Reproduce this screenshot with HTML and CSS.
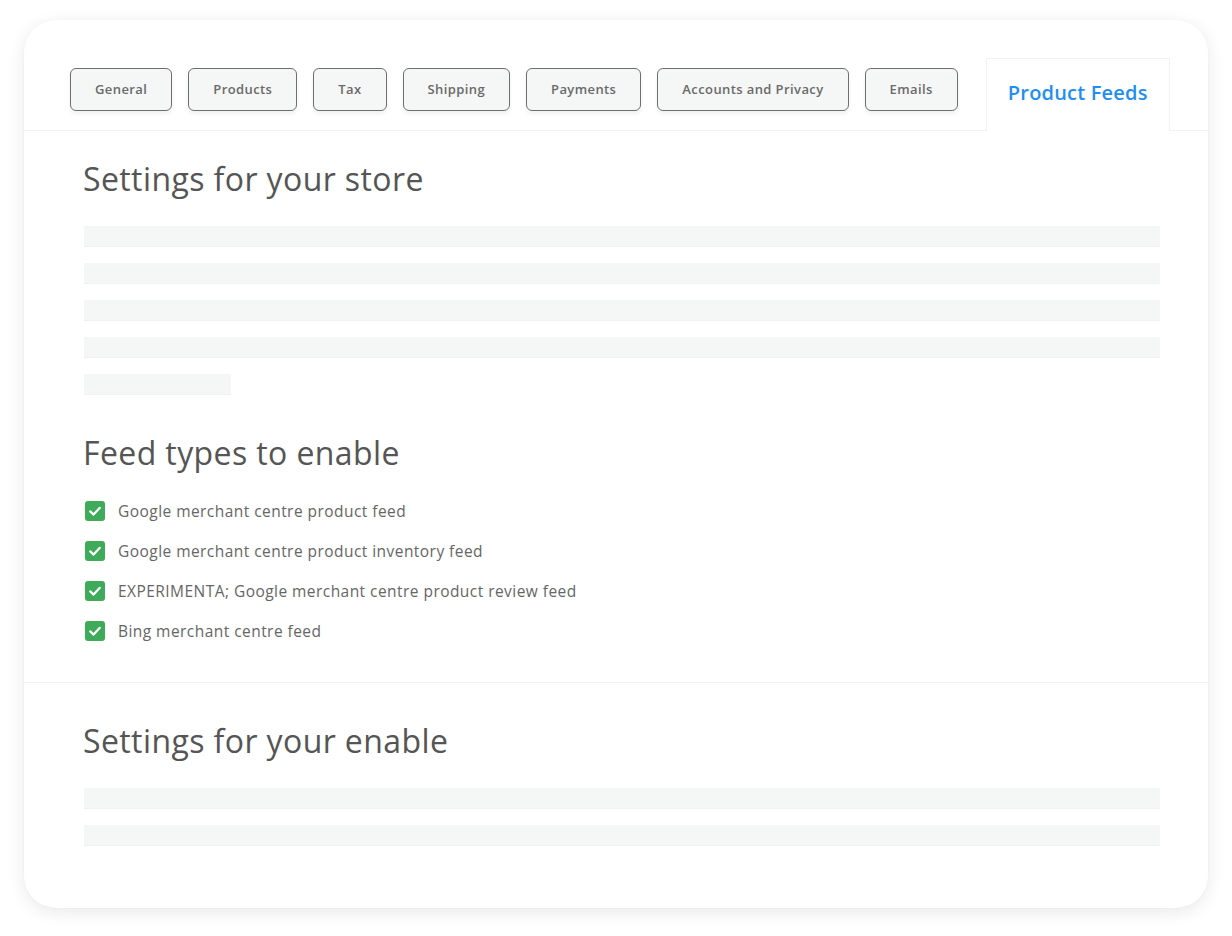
FILE: index.html
```html
<!DOCTYPE html>
<html>
<head>
<meta charset="utf-8">
<link rel="stylesheet" href="styles.css">
</head>
<body>
<div class="card">
  <div class="tabbar">
    <div class="tab">General</div>
    <div class="tab">Products</div>
    <div class="tab">Tax</div>
    <div class="tab">Shipping</div>
    <div class="tab">Payments</div>
    <div class="tab">Accounts and Privacy</div>
    <div class="tab">Emails</div>
    <div class="tab-active">Product Feeds</div>
  </div>
  <div class="section">
    <h2 class="heading">Settings for your store</h2>
    <div class="bars">
      <div class="bar"></div>
      <div class="bar"></div>
      <div class="bar"></div>
      <div class="bar"></div>
      <div class="bar short"></div>
    </div>
    <h2 class="heading heading-feed">Feed types to enable</h2>
    <ul class="checks">
      <li class="check"><span class="box"><svg viewBox="0 0 20 20" width="20" height="20"><path d="M5.2 10.4 L8.6 13.6 L14.8 6.8" fill="none" stroke="#fff" stroke-width="2.2" stroke-linecap="round" stroke-linejoin="round"/></svg></span>Google merchant centre product feed</li>
      <li class="check"><span class="box"><svg viewBox="0 0 20 20" width="20" height="20"><path d="M5.2 10.4 L8.6 13.6 L14.8 6.8" fill="none" stroke="#fff" stroke-width="2.2" stroke-linecap="round" stroke-linejoin="round"/></svg></span>Google merchant centre product inventory feed</li>
      <li class="check"><span class="box"><svg viewBox="0 0 20 20" width="20" height="20"><path d="M5.2 10.4 L8.6 13.6 L14.8 6.8" fill="none" stroke="#fff" stroke-width="2.2" stroke-linecap="round" stroke-linejoin="round"/></svg></span>EXPERIMENTA; Google merchant centre product review feed</li>
      <li class="check"><span class="box"><svg viewBox="0 0 20 20" width="20" height="20"><path d="M5.2 10.4 L8.6 13.6 L14.8 6.8" fill="none" stroke="#fff" stroke-width="2.2" stroke-linecap="round" stroke-linejoin="round"/></svg></span>Bing merchant centre feed</li>
    </ul>
  </div>
  <div class="section section-bottom">
    <h2 class="heading">Settings for your enable</h2>
    <div class="bars">
      <div class="bar"></div>
      <div class="bar"></div>
    </div>
  </div>
</div>
</body>
</html>
```
FILE: styles.css
```css
* { box-sizing: border-box; }
html, body { margin: 0; padding: 0; background: #ffffff; }
body { width: 1232px; height: 936px; overflow: hidden; }

.card {
  margin: 20px 0 0 24px;
  width: 1184px;
  height: 888px;
  background: #ffffff;
  border-radius: 32px;
  box-shadow: 0 4px 18px rgba(0, 0, 0, 0.09), 0 0 2px rgba(0,0,0,0.04);
  overflow: hidden;
}

.tabbar {
  display: flex;
  align-items: flex-start;
  padding: 38px 0 0 46px;
  border-bottom: 1px solid #f1f2f2;
  height: 111px;
}

.tab {
  margin-top: 10px;
  margin-right: 16px;
  height: 43px;
  padding: 0 24px 1px;
  display: flex;
  align-items: center;
  justify-content: center;
  border: 1px solid #6e6e6e;
  border-radius: 6px;
  background: #f5f6f6;
  box-shadow: 0 3px 4px rgba(0, 0, 0, 0.06);
  font-family: "Open Sans", "Liberation Sans", sans-serif;
  font-weight: 600;
  font-size: 13px;
  letter-spacing: 0.4px;
  color: #6a6a6a;
  white-space: nowrap;
}

.tab-active {
  margin-left: 12px;
  height: 73px;
  width: 184px;
  padding-bottom: 6px;
  display: flex;
  align-items: center;
  justify-content: center;
  background: #ffffff;
  border: 1px solid #f1f2f2;
  border-bottom: none;
  margin-bottom: -1px;
  font-family: "Open Sans", "Liberation Sans", sans-serif;
  font-weight: 600;
  font-size: 20px;
  letter-spacing: 0.2px;
  color: #1e8ff0;
  white-space: nowrap;
}

.section {
  padding: 28px 48px 0 59px;
  height: 552px;
  border-bottom: 1px solid #f1f2f2;
}

.section-bottom {
  border-bottom: none;
  height: auto;
  padding-top: 38px;
}

.heading {
  margin: 0;
  font-family: "Open Sans", "Liberation Sans", sans-serif;
  font-weight: 400;
  font-size: 32px;
  line-height: 40px;
  color: #555555;
  letter-spacing: 0.4px;
}

.bars {
  display: flex;
  flex-direction: column;
  gap: 16px;
  margin-top: 27px;
  padding-left: 1px;
}

.bar {
  height: 21px;
  background: #f5f6f6;
  border-bottom: 1px dotted #eceeee;
}

.bar.short { width: 147px; }

.heading-feed { margin-top: 38px; }

.checks {
  list-style: none;
  margin: 28px 0 0 0;
  padding: 0 0 0 2px;
  display: flex;
  flex-direction: column;
  gap: 20px;
}

.check {
  display: flex;
  align-items: center;
  height: 20px;
  font-family: "Open Sans", "Liberation Sans", sans-serif;
  font-size: 15.5px;
  letter-spacing: 0.45px;
  color: #666666;
}

.box {
  width: 20px;
  height: 20px;
  border-radius: 3px;
  background: #3dab5a;
  margin-right: 13px;
  display: flex;
  flex-shrink: 0;
}
```
